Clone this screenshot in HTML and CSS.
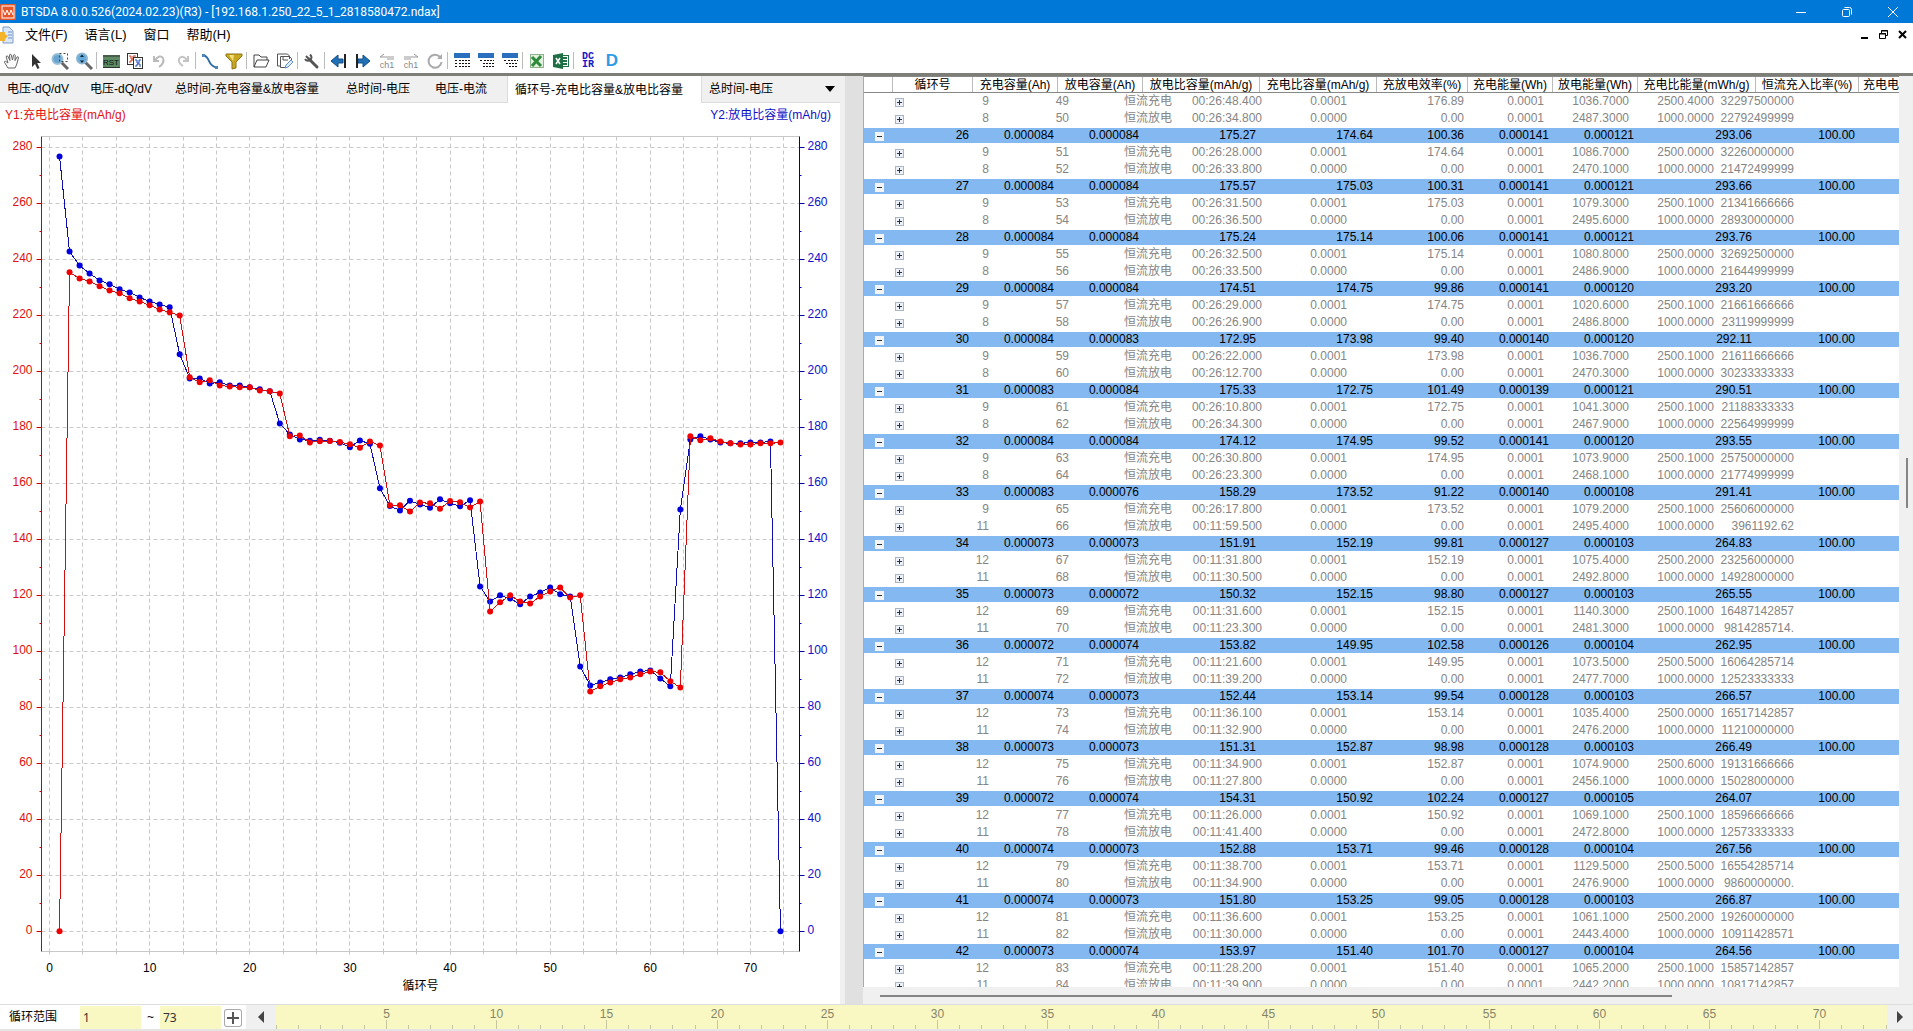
FILE: index.html
```html
<!DOCTYPE html>
<html lang="zh-CN">
<head>
	<meta charset="utf-8">
	<title>BTSDA 8.0.0.526(2024.02.23)(R3) - [192.168.1.250_22_5_1_2818580472.ndax]</title>
	<link rel="stylesheet" href="styles.css">
</head>
<body>
	<header class="titlebar">
		<svg class="logo" width="16" height="16" viewBox="0 0 16 16"><rect width="16" height="16" rx="1" fill="#e8572a"/><rect x="2" y="2" width="12" height="12" fill="none" stroke="#fff"/><path d="M3 6l2 5 2-5 2 5 2-5 2 5" fill="none" stroke="#fff"/></svg>
		<h1 class="title">BTSDA 8.0.0.526(2024.02.23)(R3) - [192.168.1.250_22_5_1_2818580472.ndax]</h1>
		<div class="win-btns">
			<button aria-label="最小化"><svg width="12" height="12"><path d="M1 6.5h10" stroke="#fff"/></svg></button>
			<button aria-label="还原"><svg width="12" height="12" fill="none" stroke="#fff"><rect x="1.500" y="3.500" width="7" height="7" rx="1"/><path d="M3.500 1.500h5q2 0 2 2v5"/></svg></button>
			<button aria-label="关闭"><svg width="12" height="12"><path d="M1 1l10 10M11 1L1 11" stroke="#fff"/></svg></button>
		</div>
	</header>

	<nav class="menubar">
		<svg class="doc" width="14" height="18" viewBox="0 0 14 18"><path d="M3 1h6l4 4v12H3z" fill="#dbe8f8" stroke="#7f9cc5"/><path d="M8 6h4M8 9h4M8 12h4" stroke="#6e90c4"/><path d="M0 6h5v2l3 2-3 3v2H0z" fill="#f5b32c"/></svg>
		<button class="m-file">文件(F)</button>
		<button class="m-lang">语言(L)</button>
		<button class="m-win">窗口</button>
		<button class="m-help">帮助(H)</button>
		<div class="mdi-btns">
			<button aria-label="最小化文档"><svg width="11" height="11"><path d="M2 9h7" stroke="#000" stroke-width="2"/></svg></button>
			<button aria-label="还原文档"><svg width="11" height="11" fill="none" stroke="#000"><path d="M3.500 4V1.500h6v5H8M3 2h7"/><path d="M1.500 4.500h6v5h-6zM1 5h7"/></svg></button>
			<button aria-label="关闭文档"><svg width="11" height="11"><path d="M2 2l7 7M9 2L2 9" stroke="#000" stroke-width="2"/></svg></button>
		</div>
	</nav>

	<div class="toolbar">
		<button aria-label="平移"><svg width="18" height="18" viewBox="0 0 18 18"><path d="M5 16L1.500 10.500q-.5-1.500 1-1.200L5 11 3.200 5q0-1.600 1.500-1L7 8.500 6.500 3q.6-1.600 1.700-.3L9.500 8l1-5q1-1.300 1.700.2L12 8.600 14 5q1.400-.8 1.500.7L13.500 13 12 16z" fill="#fafafa" stroke="#666"/></svg></button>
		<button aria-label="选择"><svg width="18" height="18" viewBox="0 0 18 18"><path d="M5 2v13l3-3 2.500 5 2-1-2.300-5H14z" fill="#333"/></svg></button>
		<button aria-label="框选缩放"><svg width="18" height="18" viewBox="0 0 18 18"><path d="M10 10l7 7" stroke="#666" stroke-width="3"/><circle cx="6.500" cy="7" r="5" fill="#69a5cf" stroke="#9abfd8" stroke-width="2"/><path d="M8.500 1.500h8v8h-8z" fill="none" stroke="#444" stroke-dasharray="2 2"/></svg></button>
		<button aria-label="缩放"><svg width="18" height="18" viewBox="0 0 18 18"><path d="M10 10l7 7" stroke="#666" stroke-width="3"/><circle cx="7" cy="6.500" r="5" fill="#65aada" stroke="#8db6d2" stroke-width="2"/><path d="M7 2.500L9 5H5zM7 11L5 8.500h4z" fill="#123"/></svg></button>
		<i class="sep"></i>
		<button aria-label="RST"><svg width="18" height="18" viewBox="0 0 18 18"><rect x="1" y="3" width="17" height="13" fill="#5d8a62"/><path d="M1 4h17M1 15.500h17" stroke="#333"/><text x="9" y="13" text-anchor="middle" class="ico-rst">RST</text></svg></button>
		<button aria-label="波形对比"><svg width="18" height="18" viewBox="0 0 18 18"><rect x="1.500" y="1.500" width="10" height="11" fill="#fff" stroke="#333"/><path d="M3 4h2v3h2V4h3M3 10h2V8h3v2" fill="none" stroke="#d03a1c"/><rect x="7.500" y="5.500" width="9" height="11" fill="#fff" stroke="#333"/><path d="M9 8h2v3h2V8h2M9 14h2v-2h3v3" fill="none" stroke="#1b49b8"/></svg></button>
		<button aria-label="撤销"><svg width="18" height="18" viewBox="0 0 18 18"><path d="M4 4v5h5" fill="none" stroke="#bbb" stroke-width="2"/><path d="M5 8q5-6 8-2 2 5-4 9" fill="none" stroke="#bbb" stroke-width="2"/></svg></button>
		<button aria-label="重做"><svg width="18" height="18" viewBox="0 0 18 18"><path d="M14 4v5H9" fill="none" stroke="#c4c4c4" stroke-width="2"/><path d="M13 8Q8 2 5 7q-1 4 4 7" fill="none" stroke="#c4c4c4" stroke-width="2"/></svg></button>
		<i class="sep"></i>
		<button aria-label="曲线"><svg width="18" height="18" viewBox="0 0 18 18"><path d="M2 3q4 1 6 6t8 7" fill="none" stroke="#2d6da3" stroke-width="2"/><path d="M1 2h3v3H1zM14 14h3v3h-3z" fill="#4d88b8"/></svg></button>
		<button aria-label="筛选"><svg width="18" height="18" viewBox="0 0 18 18"><path d="M1 2h16v2l-6 6v6l-4 1v-7L1 4z" fill="#c8a823" stroke="#8d7312"/><path d="M4 3h5L8 9z" fill="#f3e07a"/></svg></button>
		<i class="sep"></i>
		<button aria-label="打开"><svg width="18" height="18" viewBox="0 0 18 18"><path d="M2 15V3h5l2 2h6v3M2 15L5 8h12l-3 7z" fill="none" stroke="#444"/></svg></button>
		<button aria-label="另存"><svg width="18" height="18" viewBox="0 0 18 18" fill="none"><path d="M4 14H1.500v-12h10l2 2V7M4.500 15.500v-11h9l2 2V10M4.500 15.500H9M7 5v3h5" stroke="#555"/><path d="M9 16l1-3 5-5 2 2-5 5z" fill="#dcebff" stroke="#5b8fd0"/></svg></button>
		<i class="sep"></i>
		<button aria-label="设置"><svg width="18" height="18" viewBox="0 0 18 18"><path d="M6 7l8 8" stroke="#555" stroke-width="3" stroke-linecap="round"/><path d="M3 4l3 3M7 2.500q3 3 0 5.500-3 2-5-1" fill="none" stroke="#555" stroke-width="2"/></svg></button>
		<i class="sep"></i>
		<button aria-label="上一个"><svg width="18" height="18" viewBox="0 0 18 18"><path d="M1 9l7-6v4h5v4H8v4z" fill="#1f70b5" stroke="#134f86"/><path d="M15 2v14" stroke="#222" stroke-width="2"/></svg></button>
		<button aria-label="下一个"><svg width="18" height="18" viewBox="0 0 18 18"><path d="M16 9l-7-6v4H4v4h5v4z" fill="#1f70b5" stroke="#134f86"/><path d="M3 2v14" stroke="#222" stroke-width="2"/></svg></button>
		<button aria-label="上一通道"><svg width="18" height="18" viewBox="0 0 18 18"><path d="M2 5h14M2 5l4-3M9 7h7" fill="none" stroke="#999"/><text x="9" y="16" text-anchor="middle" class="ico-ch">ch1</text></svg></button>
		<button aria-label="下一通道"><svg width="18" height="18" viewBox="0 0 18 18"><path d="M2 5h14M16 5l-4-3M2 7h7" fill="none" stroke="#999"/><text x="9" y="16" text-anchor="middle" class="ico-ch">ch1</text></svg></button>
		<button aria-label="刷新"><svg width="18" height="18" viewBox="0 0 18 18"><path d="M14 5a6.500 6.500 0 1 0 1.500 5" fill="none" stroke="#aaa" stroke-width="2"/><path d="M16 2v5h-5z" fill="#aaa"/></svg></button>
		<i class="sep"></i>
		<button aria-label="列表一级"><svg width="18" height="18" viewBox="0 0 18 18"><path d="M1 1h16v5H1z" fill="#2a6fbd"/><path d="M2 8.500h2M2 11.500h2M2 14.500h2" stroke="#111"/><path d="M6 8.500h11M6 11.500h11M6 14.500h11" stroke="#111" stroke-dasharray="2 1"/></svg></button>
		<button aria-label="列表二级"><svg width="18" height="18" viewBox="0 0 18 18"><path d="M1 1h16v5H1z" fill="#2a6fbd"/><path d="M3 8.500h2M6 11.500h2M6 14.500h2" stroke="#111"/><path d="M7 8.500h10M9 11.500h8M9 14.500h8" stroke="#111" stroke-dasharray="2 1"/></svg></button>
		<button aria-label="列表三级"><svg width="18" height="18" viewBox="0 0 18 18"><path d="M1 1h16v5H1z" fill="#2a6fbd"/><path d="M3 8.500h2M5 11.500h2M8 14.500h2" stroke="#111"/><path d="M7 8.500h10M8 11.500h9M11 14.500h6" stroke="#111" stroke-dasharray="2 1"/></svg></button>
		<i class="sep"></i>
		<button aria-label="导出"><svg width="18" height="18" viewBox="0 0 18 18"><rect x="2.500" y="2.500" width="13" height="13" fill="#e3f0e0" stroke="#8fb48c"/><path d="M4 5l9 9M13 4l-9 10" stroke="#2c8a3a" stroke-width="3"/></svg></button>
		<button aria-label="导出Excel"><svg width="18" height="18" viewBox="0 0 18 18"><rect x="9.500" y="3.500" width="7" height="11" fill="#fff" stroke="#1d7044"/><path d="M11 6h4M11 9h4M11 12h4" stroke="#1d7044" stroke-width="2"/><path d="M1 3l10-2v16L1 15z" fill="#1d7044"/><path d="M4 6l4 6M8 6l-4 6" stroke="#fff" stroke-width="1.500"/></svg></button>
		<i class="sep"></i>
		<button aria-label="DCIR" class="dcir"><span>DC</span><span>IR</span></button>
		<button aria-label="D" class="d-btn">D</button>
	</div>

	<main class="work">
		<section class="left">
			<div class="tabs" role="tablist">
				<button role="tab">电压-dQ/dV</button>
				<button role="tab">电压-dQ/dV</button>
				<button role="tab">总时间-充电容量&amp;放电容量</button>
				<button role="tab">总时间-电压</button>
				<button role="tab">电压-电流</button>
				<button role="tab" class="active" aria-selected="true">循环号-充电比容量&amp;放电比容量</button>
				<button role="tab">总时间-电压</button>
				<button class="more" aria-label="更多"><svg width="10" height="6"><path d="M0 0h10L5 6z"/></svg></button>
			</div>
			<div class="chart"><svg id="chart"></svg></div>
		</section>
		<div class="splitter"></div>
		<section class="right">
			<div class="grid-box">
				<table class="grid">
					<thead>
						<tr>
							<th></th><th>循环号</th><th>充电容量(Ah)</th><th>放电容量(Ah)</th><th>放电比容量(mAh/g)</th><th>充电比容量(mAh/g)</th><th>充放电效率(%)</th><th>充电能量(Wh)</th><th>放电能量(Wh)</th><th>充电比能量(mWh/g)</th><th>恒流充入比率(%)</th><th class="cut">充电电</th>
						</tr>
					</thead>
					<tbody id="rows"></tbody>
				</table>
			</div>
			<div class="vscroll"><div class="vthumb"></div></div>
			<div class="hscroll"><div class="hthumb"></div></div>
		</section>
	</main>

	<footer class="range">
		<label for="from">循环范围</label>
		<input id="from" type="text" value="1">
		<label for="to" class="tilde">~</label>
		<input id="to" type="text" value="73">
		<button class="plus" aria-label="添加"><svg width="18" height="18"><path d="M9 3v12M3 9h12" stroke="#555" stroke-width="2"/></svg></button>
		<button class="arrow" aria-label="向左"><svg width="6" height="12"><path d="M6 0v12L0 6z" fill="#444"/></svg></button>
		<svg id="ruler"></svg>
		<button class="arrow next" aria-label="向右"><svg width="6" height="12"><path d="M0 0v12l6-6z" fill="#444"/></svg></button>
	</footer>

	<script src="script.js"></script>
</body>
</html>
```
FILE: styles.css
```css
* {
	box-sizing: border-box;
}
body {
	margin: 0;
	height: 100vh;
	display: flex;
	flex-direction: column;
	overflow: hidden;
	background: #fff;
	color: #000;
	font: 12px/16px "Liberation Sans", "Noto Sans CJK SC", sans-serif;
}
button {
	border: 0;
	padding: 0;
	margin: 0;
	background: none;
	font: inherit;
	color: inherit;
}
svg {
	display: block;
}

/* title + menu */
.titlebar {
	display: flex;
	align-items: center;
	height: 23px;
	background: #0078d7;
	color: #fff;
}
.title {
	flex: 1;
	margin: 0 0 0 5px;
	font: 12px/20px Roboto, sans-serif;
}
.win-btns {
	display: flex;
}
.win-btns button {
	width: 46px;
	height: 20px;
	padding-right: 14px;
	display: flex;
	align-items: center;
	justify-content: flex-end;
}
.menubar {
	display: flex;
	align-items: center;
	height: 23px;
	font-size: 13px;
}
.menubar .doc {
	margin-right: 11px;
}
.m-file, .m-lang, .m-win {
	margin-right: 17px;
}
.mdi-btns {
	display: flex;
	gap: 8px;
	margin-left: auto;
	padding-right: 5px;
}

/* toolbar */
.toolbar {
	display: flex;
	align-items: center;
	height: 30px;
	padding-top: 2px;
	border-bottom: 3px solid #7e7e78;
}
.toolbar button {
	width: 24px;
	height: 24px;
	display: flex;
	align-items: center;
	justify-content: center;
}
.sep {
	width: 3px;
	height: 17px;
	border-left: 1px solid #bbb;
}
.ico-rst {
	font-size: 8px;
	fill: #111;
}
.ico-ch {
	font-size: 9px;
	fill: #888;
}
.toolbar .dcir {
	flex-direction: column;
	font: bold 10px/8px "Liberation Mono", monospace;
	color: #1414c8;
}
.toolbar .d-btn {
	font: bold 17px/20px "Liberation Sans", sans-serif;
	color: #2f9be8;
}

.work {
	flex: 1;
	min-height: 0;
	display: grid;
	grid-template-columns: 4fr 23px 5fr;
}
.left {
	display: flex;
	flex-direction: column;
	min-width: 0;
}
.tabs {
	display: grid;
	grid-template-columns: 83px 85px 171px 89px 79px 195px 1fr 15px;
	height: 27px;
	background: #f0f0f0;
	border-bottom: 1px solid #dcdcdc;
}
.tabs button {
	text-align: left;
	padding-left: 7px;
	white-space: nowrap;
}
.tabs .active {
	background: #fff;
	margin-bottom: -1px;
	border-left: 1px solid #dcdcdc;
	border-right: 1px solid #dcdcdc;
}
.tabs .more {
	padding: 0;
}
.chart {
	flex: 1;
	min-height: 0;
}
#chart {
	width: 100%;
	height: 100%;
}
.splitter {
	background: #e0e0e0;
	border-left: 5px solid #f0f0f0;
}

/* chart parts */
.gridline {
	stroke: #c8c8c8;
	stroke-dasharray: 4 3;
}
.frame {
	stroke: #c8c8c8;
}
.axis-red {
	stroke: #c80000;
}
.axis-blue {
	stroke: #0000a8;
}
.t-red {
	fill: #e01010;
}
.t-blue {
	fill: #1010c8;
}
.line-red, .line-blue {
	fill: none;
	shape-rendering: crispEdges;
}
.line-red {
	stroke: #d01010;
}
.line-blue {
	stroke: #1010b0;
}
.dot-red {
	fill: #f00000;
}
.dot-blue {
	fill: #0000e0;
}

/* data table */
.right {
	display: grid;
	grid-template-columns: 1fr 14px;
	grid-template-rows: 1fr 17px;
	min-width: 0;
	min-height: 0;
}
.grid-box {
	overflow: hidden;
	min-width: 0;
	min-height: 0;
	border-top: 1px solid #888;
	border-left: 1px solid #aaa;
}
.grid, .grid thead, .grid tbody {
	display: block;
}
.grid tr {
	display: grid;
	height: 17px;
	line-height: 17px;
}
.grid thead tr {
	height: 16px;
	border-bottom: 1px solid #888;
}
.grid thead tr, .grid .cycle {
	grid-template-columns: 29px 80px 85px 85px 117px 117px 91px 85px 85px 118px 103px 1fr;
}
.grid .step {
	grid-template-columns: 129px 80px 103px 90px 85px 117px 80px 85px 85px 80px 1fr;
	color: #858585;
}
.grid th {
	padding: 0;
	font-weight: normal;
	white-space: nowrap;
	border-right: 1px solid #bbb;
	height: 15px;
	line-height: 16px;
}
.grid .cut {
	border: 0;
	text-align: left;
	padding-left: 4px;
}
.grid td {
	padding: 0 4px 0 0;
	text-align: right;
	white-space: nowrap;
}
.grid .cycle {
	background: #84b8f0;
	border: solid #fff;
	border-width: 1px 0;
	line-height: 15px;
}
.grid .cycle .tree {
	padding: 4px 0 0 11px;
}
.grid .step .tree {
	display: flex;
	justify-content: space-between;
	padding-left: 31px;
}
.box {
	width: 9px;
	height: 9px;
	display: block;
	background: #eef2f8;
	border: 1px solid #a9b4c4;
}
.step .box {
	margin-top: 5px;
}
.cycle .box {
	border-color: #f4f4f4;
	background: #f4f4f4;
}
.vscroll {
	background: #f0f0f0;
	padding: 382px 5px 0 7px;
}
.vthumb {
	height: 50px;
	background: #858585;
}
.hscroll {
	grid-column: 1 / 3;
	background: #f0f0f0;
	padding: 8px 241px 0 17px;
}
.hthumb {
	height: 2px;
	background: #858585;
}

/* cycle range */
.range {
	display: flex;
	align-items: stretch;
	height: 27px;
	border-top: 1px solid #ddd;
	border-bottom: 2px solid #e4e4e4;
	line-height: 24px;
}
.range label {
	width: 80px;
	padding-left: 9px;
}
.range .tilde {
	width: 19px;
	padding-left: 6px;
}
.range input {
	width: 61px;
	border: 0;
	padding: 0 3px;
	margin-top: 1px;
	background: #f9f7c2;
	color: #333;
	font: 12px/20px "Noto Sans", sans-serif;
}
.plus {
	width: 18px;
	height: 18px;
	margin: 4px 4px 0 3px;
	border-radius: 3px;
	box-shadow: inset 0 0 0 1px #aaa;
}
.arrow {
	width: 30px;
	background: #f0f0f0;
	display: flex;
	align-items: center;
	justify-content: center;
}
.next {
	width: 26px;
}
#ruler {
	flex: 1;
	min-width: 0;
	height: 24px;
	background: #f9f7c2;
}
.ruler-text {
	fill: #85856a;
}
.ruler-tick {
	stroke: #c8c6a0;
}
```
FILE: script.js
```js
// discharge (Y2) and charge (Y1) specific capacity for cycles 1..73
var blue = [276.8,242.8,237.8,235,232.5,231.1,229.3,228.2,226.4,225,223.9,222.9,206.1,197.5,197.5,195.7,196.1,195,195,194.3,193.6,192.9,181.4,177.5,175.7,
	175.27,175.57,175.24,174.51,172.95,175.33,174.12,158.29,151.91,150.32,153.82,152.44,151.31,154.31,152.88,151.80,153.97,
	123.2,117.8,120,118.9,116.8,119.6,121,122.8,120.4,119.6,94.6,87.8,88.9,90,90.7,91.8,92.8,93.2,90.3,87.5,150.7,175.7,176.8,175.7,174.6,174.3,174.3,174.6,174.6,175,0];
var red = [0,235.4,233.2,232.1,230.4,228.9,227.9,226.1,225,223.6,222.1,221.1,220,197.9,196.1,196.8,195,194.6,194.3,194.3,193.2,192.9,192.1,176.8,177.1,
	174.64,175.03,175.14,174.75,173.98,172.75,174.95,173.52,152.19,152.15,149.95,153.14,152.87,150.92,153.71,153.25,151.40,
	153.5,114.2,117.5,120,117.8,117.1,119.6,121.4,122.8,119.2,120,85.7,87.5,88.9,90,90.7,91.8,92.8,92.5,89.3,87.1,176.8,175.4,176.1,175,174.3,173.9,173.9,174.3,174.3,174.6];

// cycle row | charge step | discharge step
var cycles = [
	"26 0.000084 0.000084 175.27 174.64 100.36 0.000141 0.000121 293.06|9 00:26:28.000 1086.7000 2500.0000 32260000000|8 00:26:33.800 2470.1000 1000.0000 21472499999",
	"27 0.000084 0.000084 175.57 175.03 100.31 0.000141 0.000121 293.66|9 00:26:31.500 1079.3000 2500.1000 21341666666|8 00:26:36.500 2495.6000 1000.0000 28930000000",
	"28 0.000084 0.000084 175.24 175.14 100.06 0.000141 0.000121 293.76|9 00:26:32.500 1080.8000 2500.0000 32692500000|8 00:26:33.500 2486.9000 1000.0000 21644999999",
	"29 0.000084 0.000084 174.51 174.75 99.86 0.000141 0.000120 293.20|9 00:26:29.000 1020.6000 2500.1000 21661666666|8 00:26:26.900 2486.8000 1000.0000 23119999999",
	"30 0.000084 0.000083 172.95 173.98 99.40 0.000140 0.000120 292.11|9 00:26:22.000 1036.7000 2500.1000 21611666666|8 00:26:12.700 2470.3000 1000.0000 30233333333",
	"31 0.000083 0.000084 175.33 172.75 101.49 0.000139 0.000121 290.51|9 00:26:10.800 1041.3000 2500.1000 21188333333|8 00:26:34.300 2467.9000 1000.0000 22564999999",
	"32 0.000084 0.000084 174.12 174.95 99.52 0.000141 0.000120 293.55|9 00:26:30.800 1073.9000 2500.1000 25750000000|8 00:26:23.300 2468.1000 1000.0000 21774999999",
	"33 0.000083 0.000076 158.29 173.52 91.22 0.000140 0.000108 291.41|9 00:26:17.800 1079.2000 2500.1000 25606000000|11 00:11:59.500 2495.4000 1000.0000 3961192.62",
	"34 0.000073 0.000073 151.91 152.19 99.81 0.000127 0.000103 264.83|12 00:11:31.800 1075.4000 2500.2000 23256000000|11 00:11:30.500 2492.8000 1000.0000 14928000000",
	"35 0.000073 0.000072 150.32 152.15 98.80 0.000127 0.000103 265.55|12 00:11:31.600 1140.3000 2500.1000 16487142857|11 00:11:23.300 2481.3000 1000.0000 9814285714.",
	"36 0.000072 0.000074 153.82 149.95 102.58 0.000126 0.000104 262.95|12 00:11:21.600 1073.5000 2500.5000 16064285714|11 00:11:39.200 2477.7000 1000.0000 12523333333",
	"37 0.000074 0.000073 152.44 153.14 99.54 0.000128 0.000103 266.57|12 00:11:36.100 1035.4000 2500.0000 16517142857|11 00:11:32.900 2476.2000 1000.0000 11210000000",
	"38 0.000073 0.000073 151.31 152.87 98.98 0.000128 0.000103 266.49|12 00:11:34.900 1074.9000 2500.6000 19131666666|11 00:11:27.800 2456.1000 1000.0000 15028000000",
	"39 0.000072 0.000074 154.31 150.92 102.24 0.000127 0.000105 264.07|12 00:11:26.000 1069.1000 2500.1000 18596666666|11 00:11:41.400 2472.8000 1000.0000 12573333333",
	"40 0.000074 0.000073 152.88 153.71 99.46 0.000128 0.000104 267.56|12 00:11:38.700 1129.5000 2500.5000 16554285714|11 00:11:34.900 2476.9000 1000.0000 9860000000.",
	"41 0.000074 0.000073 151.80 153.25 99.05 0.000128 0.000103 266.87|12 00:11:36.600 1061.1000 2500.2000 19260000000|11 00:11:30.000 2443.4000 1000.0000 10911428571",
	"42 0.000073 0.000074 153.97 151.40 101.70 0.000127 0.000104 264.56|12 00:11:28.200 1065.2000 2500.1000 15857142857|11 00:11:39.900 2442.2000 1000.0000 10817142857"
];

function stepRow(str, num, charge, cap) {
	var s = str.split(" ");
	var cells = [num, charge ? "恒流充电" : "恒流放电", s[1], charge ? "0.0001" : "0.0000", cap, "0.0001", s[2], s[3], s[4]];
	return `<tr class="step"><td class="tree"><svg class="box" viewBox="0 0 7 7"><path d="M1 3.5h5M3.5 1v5" stroke="#234"/></svg><span>${s[0]}</span></td>` +
		cells.map(c => `<td>${c}</td>`).join("") + `</tr>`;
}

function drawTable() {
	var str = stepRow("9 00:26:48.400 1036.7000 2500.4000 32297500000", 49, true, "176.89") +
		stepRow("8 00:26:34.800 2487.3000 1000.0000 22792499999", 50, false, "0.00");
	cycles.forEach(function (line) {
		var p = line.split("|");
		var c = p[0].split(" ");
		str += `<tr class="cycle"><td class="tree"><svg class="box" viewBox="0 0 7 7"><path d="M1 3.5h5" stroke="#234"/></svg></td>` +
			c.map(v => `<td>${v}</td>`).join("") + `<td>100.00</td></tr>`;
		str += stepRow(p[1], c[0] * 2 - 1, true, c[4]);
		str += stepRow(p[2], c[0] * 2, false, "0.00");
	});
	document.getElementById("rows").innerHTML = str;
}

function line(x1, y1, x2, y2, cls) {
	return `<line x1="${x1}" y1="${y1}" x2="${x2}" y2="${y2}" class="${cls}"/>`;
}
function text(x, y, anchor, cls, t) {
	return `<text x="${x}" y="${y}" text-anchor="${anchor}" class="${cls}">${t}</text>`;
}
// centre 1px lines on the pixel
function snap(v) {
	return Math.floor(v) + 0.5;
}

function drawChart() {
	var svg = document.getElementById("chart");
	var w = svg.clientWidth, h = svg.clientHeight;
	var l = 41.5, r = w - 40.5, t = 33.5, b = h - 52.5;
	var X = v => l + (v + 0.8) * (r - l) / 75.7;
	var Y = v => b - (v + 7.2) * (b - t) / 291.1;
	var s = "";
	for (var k = 0; k <= 22; k++) {
		var gx = snap(X(k * 10 / 3));
		s += line(gx, t, gx, b, "gridline") + line(gx, b, gx, b + 3, "frame");
	}
	for (var v = 0; v <= 280; v += 20) {
		s += line(l, snap(Y(v)), r, snap(Y(v)), "gridline");
	}
	s += line(l, t, r, t, "frame") + line(l, b, r, b, "frame");
	for (v = 0; v <= 280; v += 10) {
		var y = snap(Y(v));
		var len = v % 20 ? 2 : 5;
		s += line(l - len, y, l, y, "axis-red") + line(r, y, r + len, y, "axis-blue");
		if (len == 5) {
			s += text(l - 9, y + 2, "end", "t-red", v) + text(r + 8, y + 2, "start", "t-blue", v);
		}
	}
	s += line(l, t, l, b, "axis-red") + line(r, t, r, b, "axis-blue");
	for (v = 0; v <= 70; v += 10) {
		s += text(X(v), b + 20, "middle", "", v);
	}
	s += text((l + r) / 2, b + 38, "middle", "", "循环号");
	s += text(5, 16, "start", "t-red", "Y1:充电比容量(mAh/g)");
	s += text(w - 9, 16, "end", "t-blue", "Y2:放电比容量(mAh/g)");
	[[blue, "blue"], [red, "red"]].forEach(function (d) {
		var pts = d[0].map((v, i) => [X(i + 1), Y(v)]);
		s += `<polyline class="line-${d[1]}" points="${pts.join(" ")}"/>`;
		pts.forEach(p => s += `<circle class="dot-${d[1]}" cx="${p[0]}" cy="${p[1]}" r="3"/>`);
	});
	svg.innerHTML = s;
}

function drawRuler() {
	var svg = document.getElementById("ruler");
	var w = svg.clientWidth;
	var s = "";
	for (var v = 0; v <= 73; v++) {
		var x = snap(v * (w - 1) / 73);
		var major = v > 0 && v % 5 == 0;
		s += line(x, major ? 15 : 20, x, 24, "ruler-tick");
		if (major) s += text(x, 13, "middle", "ruler-text", v);
	}
	svg.innerHTML = s;
}

drawTable();
drawChart();
drawRuler();
window.addEventListener("resize", function () {
	drawChart();
	drawRuler();
});
```
